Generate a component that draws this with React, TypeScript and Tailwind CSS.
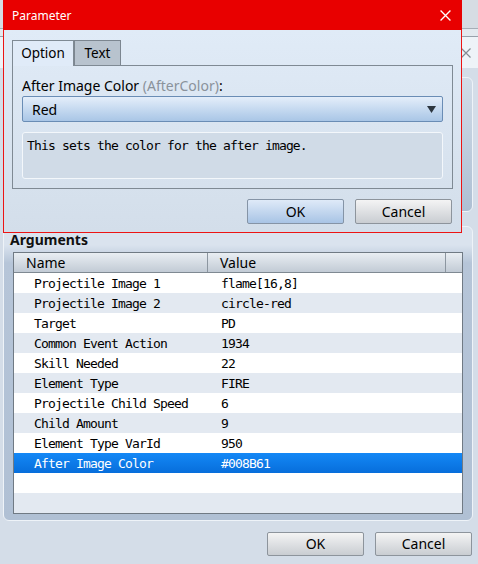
import React from 'react';

const ui = "font-['Noto_Sans','Liberation_Sans',sans-serif]";
const mono = "font-['DejaVu_Sans_Mono','Liberation_Mono',monospace]";

interface Arg {
  name: string;
  value: string;
}

const args: Arg[] = [
  { name: 'Projectile Image 1', value: 'flame[16,8]' },
  { name: 'Projectile Image 2', value: 'circle-red' },
  { name: 'Target', value: 'PD' },
  { name: 'Common Event Action', value: '1934' },
  { name: 'Skill Needed', value: '22' },
  { name: 'Element Type', value: 'FIRE' },
  { name: 'Projectile Child Speed', value: '6' },
  { name: 'Child Amount', value: '9' },
  { name: 'Element Type VarId', value: '950' },
  { name: 'After Image Color', value: '#008B61' },
  { name: '', value: '' },
  { name: '', value: '' },
];

const Cross = ({ color, size }: { color: string; size: number }) => (
  <svg width={size} height={size} viewBox="0 0 10 10">
    <path d="M0.5 0.5L9.5 9.5M9.5 0.5L0.5 9.5" stroke={color} strokeWidth="1.2" />
  </svg>
);

const GrayButton = ({ label }: { label: string }) => (
  <button
    className={`${ui} w-[97px] h-[24px] rounded-[2px] border border-[#8d949c] bg-gradient-to-b from-[#f4f4f4] to-[#c9cdd2] text-[14px] text-black leading-none`}
  >
    {label}
  </button>
);

const ParameterDialog = () => (
  <div className="absolute left-[3px] top-0 w-[459px] h-[233px] border border-[#ec1414] flex flex-col bg-gradient-to-b from-[#e2edf9] to-[#d3deea]">
    {/* Title bar */}
    <div className="h-[30px] -mx-px -mt-px bg-[#e80000] flex items-center justify-between pl-[9px] pr-[11px]">
      <span className={`${ui} text-[12px] text-white pt-px`}>Parameter</span>
      <Cross color="#ffffff" size={11} />
    </div>

    <div className="flex-1 px-[8px] pt-[10px]">
      {/* Tabs */}
      <div className="flex h-[25px] items-end">
        <div className={`${ui} relative z-10 h-[26px] w-[62px] -mb-px border border-b-0 border-[#7f8a94] bg-[#e0ebf8] flex items-center justify-center text-[13.5px] text-black`}>
          Option
        </div>
        <div className={`${ui} h-[25px] w-[47px] border border-b-0 border-[#7c8690] bg-[#b8c3ce] flex items-center justify-center text-[13.5px] text-black`}>
          Text
        </div>
      </div>

      {/* Tab panel */}
      <div className="h-[124px] border border-[#7f8a94] px-[9px] pt-[11px]">
        <div className={`${ui} text-[14px] leading-[17px] text-black`}>
          After Image Color <span className="text-[#8a929b]">(AfterColor)</span>:
        </div>
        <div className="mt-[2px] h-[26px] rounded-[2px] border border-[#6a8db5] bg-gradient-to-b from-[#e4eefa] to-[#a9c6e6] flex items-center justify-between pl-[9px] pr-[6px]">
          <span className={`${ui} text-[14px] text-black`}>Red</span>
          <svg width="9" height="7" viewBox="0 0 9 7">
            <path d="M0 0H9L4.5 7Z" fill="#2c3640" />
          </svg>
        </div>
        <div className={`${mono} mt-[10px] h-[47px] rounded-[3px] border border-[#f3f7fb] bg-[#d0dbe7] pl-[4px] pt-[5px] text-[13px] leading-[16px] tracking-[-0.83px] text-black`}>
          This sets the color for the after image.
        </div>
      </div>

      {/* Buttons */}
      <div className="mt-[10px] flex justify-end gap-[11px] pr-px">
        <button
          className={`${ui} w-[97px] h-[25px] rounded-[2px] border border-[#8594a6] bg-gradient-to-b from-[#dfeaf8] to-[#a8c4e5] text-[14px] text-black leading-none`}
        >
          OK
        </button>
        <button
          className={`${ui} w-[97px] h-[25px] rounded-[2px] border border-[#8d949c] bg-gradient-to-b from-[#f4f4f4] to-[#c9cdd2] text-[14px] text-black leading-none`}
        >
          Cancel
        </button>
      </div>
    </div>
  </div>
);

const ArgumentsTable = () => (
  <div className="mx-[9px] border border-[#707a84] bg-white">
    {/* Header */}
    <div className="flex h-[20px] border-b border-[#7f8992] bg-gradient-to-b from-[#e9eef3] to-[#c2cbd5]">
      <div className={`${ui} w-[194px] border-r border-[#8c96a0] pl-[12px] text-[14px] leading-[20px] text-black`}>
        Name
      </div>
      <div className={`${ui} w-[238px] border-r border-[#8c96a0] pl-[12px] text-[14px] leading-[20px] text-black`}>
        Value
      </div>
      <div className="flex-1" />
    </div>
    {/* Rows */}
    {args.map((a, i) => {
      const selected = a.name === 'After Image Color';
      return (
        <div
          key={i}
          className={
            'flex h-[20px] items-center pt-px ' +
            (selected
              ? 'bg-gradient-to-b from-[#1488f6] to-[#076edb] text-white'
              : i % 2 === 0
                ? 'bg-white text-black'
                : 'bg-[#e3e9f1] text-black')
          }
        >
          <div className={`${mono} w-[195px] pl-[20px] text-[13px] tracking-[-0.83px] whitespace-pre`}>
            {a.name}
          </div>
          <div className={`${mono} pl-[12px] text-[13px] tracking-[-0.83px] whitespace-pre`}>
            {a.value}
          </div>
        </div>
      );
    })}
  </div>
);

export default function App() {
  return (
    <div className="relative w-[478px] h-[564px] overflow-hidden bg-[#d4dde8]">
      {/* Background window */}
      <div className="h-[29px] bg-[#d6dce3] border-b border-[#a6aeb7]" />
      <div className="h-[8px] bg-[#e3e9ef] border-b border-[#97a1ab]" />
      <div className="h-[31px] bg-[#eef3f8] flex items-center justify-end pr-[7px]">
        <Cross color="#858b92" size={10} />
      </div>

      <div className="mt-[9px] ml-[3px] mr-[5px] h-[135px] rounded-[6px] border border-[#eef3f8] bg-gradient-to-b from-[#d2dce8] to-[#aebfd3]" />

      {/* Arguments group */}
      <div className="mt-[14px] ml-[3px] mr-[5px] h-[295px] rounded-[6px] border border-[#eef3f8] bg-[linear-gradient(to_bottom,#dae3ee_0px,#dae3ee_18px,#b6c5d8_36px,#b0c0d4_100%)]">
        <div className={`${ui} pl-[6px] pt-[2px] h-[25px] text-[14px] font-bold text-[#111]`}>Arguments</div>
        <ArgumentsTable />
      </div>

      <div className="mt-[11px] flex justify-end gap-[11px] pr-[6px]">
        <GrayButton label="OK" />
        <GrayButton label="Cancel" />
      </div>

      <ParameterDialog />
    </div>
  );
}
